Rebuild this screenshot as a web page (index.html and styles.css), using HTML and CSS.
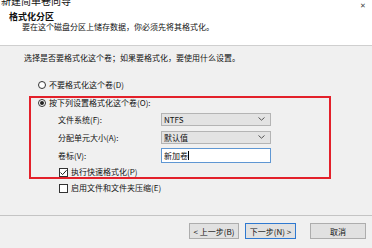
FILE: index.html
```html
<!DOCTYPE html>
<html>
<head>
	<title>新建简单卷向导</title>
	<link rel="stylesheet" href="styles.css">
</head>
<body>
	<div class="header">
		<div class="titlebar">
			<span class="title_text">新建简单卷向导</span>
			<span class="close">✕</span>
		</div>
		<div class="page_title">格式化分区</div>
		<div class="page_sub">要在这个磁盘分区上储存数据，你必须先将其格式化。</div>
	</div>
	<div class="content">
		<div class="prompt">选择是否要格式化这个卷；如果要格式化，要使用什么设置。</div>
		<div class="option first_option">
			<span class="radio"></span>
			<span>不要格式化这个卷(D)</span>
		</div>
		<div class="highlight">
			<div class="option inner_option">
				<span class="radio checked"></span>
				<span>按下列设置格式化这个卷(O):</span>
			</div>
			<div class="field">
				<span class="field_label">文件系统(F):</span>
				<div class="dropdown">
					<span>NTFS</span>
					<svg width="7" height="4" viewBox="0 0 7 4"><polyline points="0.5,0.5 3.5,3.2 6.5,0.5" fill="none" stroke="#555" stroke-width="1"/></svg>
				</div>
			</div>
			<div class="field">
				<span class="field_label">分配单元大小(A):</span>
				<div class="dropdown">
					<span>默认值</span>
					<svg width="7" height="4" viewBox="0 0 7 4"><polyline points="0.5,0.5 3.5,3.2 6.5,0.5" fill="none" stroke="#555" stroke-width="1"/></svg>
				</div>
			</div>
			<div class="field">
				<span class="field_label">卷标(V):</span>
				<div class="textbox"><span>新加卷</span><span class="caret"></span></div>
			</div>
			<div class="check_row inner_check">
				<span class="checkbox">
					<svg width="9" height="9" viewBox="0 0 9 9"><polyline points="1.5,4.5 3.6,6.6 7.6,2.2" fill="none" stroke="#222" stroke-width="1"/></svg>
				</span>
				<span>执行快速格式化(P)</span>
			</div>
		</div>
		<div class="check_row outer_check">
			<span class="checkbox"></span>
			<span>启用文件和文件夹压缩(E)</span>
		</div>
	</div>
	<div class="footer">
		<button class="btn btn_back">&lt; 上一步(B)</button>
		<button class="btn btn_next">下一步(N) &gt;</button>
		<button class="btn btn_cancel">取消</button>
	</div>
</body>
</html>
```
FILE: styles.css
```css
*{
	margin: 0px;
	padding: 0px;
	box-sizing: border-box;
}
body
{
	width: 372px;
	height: 248px;
	overflow: hidden;
	background-color: #f0f0f0;
	color: #111;
	font-family: "Noto Sans CJK SC", "Noto Sans", sans-serif;
	font-size: 8px;
}
.header
{
	height: 50px;
	background-color: #fff;
	border-bottom: 1px solid #cfcfcf;
}
.titlebar
{
	display: flex;
	justify-content: space-between;
	height: 9px;
	margin-top: -4px;
	line-height: 9px;
	font-size: 10px;
}
.title_text
{
	margin-left: 1px;
}
.close
{
	margin-right: 6px;
	margin-top: 5px;
	font-size: 7px;
	color: #444;
}
.page_title
{
	margin-top: 7px;
	margin-left: 9px;
	height: 10px;
	line-height: 10px;
	font-size: 9px;
	font-weight: bold;
}
.page_sub
{
	margin-left: 22px;
	height: 10px;
	line-height: 10px;
}
.prompt
{
	margin-top: 7px;
	margin-left: 24px;
	height: 10px;
	line-height: 10px;
}
.option, .check_row
{
	display: flex;
	align-items: center;
	gap: 3px;
	height: 10px;
	line-height: 10px;
}
.first_option
{
	margin-top: 17px;
	margin-left: 38px;
}
.radio
{
	width: 8px;
	height: 8px;
	border: 1px solid #333;
	border-radius: 50%;
	background-color: #fff;
	display: flex;
	align-items: center;
	justify-content: center;
}
.radio.checked::after
{
	content: "";
	width: 4px;
	height: 4px;
	border-radius: 50%;
	background-color: #222;
}
.highlight
{
	margin-top: 6px;
	margin-left: 29px;
	width: 302px;
	height: 83px;
	border: 2px solid #e3202a;
	padding-left: 7px;
}
.field
{
	display: flex;
	align-items: center;
	height: 14px;
	margin-top: 4px;
	padding-left: 20px;
}
.inner_option + .field
{
	margin-top: 4px;
}
.field_label
{
	width: 103px;
}
.dropdown
{
	display: flex;
	align-items: center;
	justify-content: space-between;
	width: 110px;
	height: 13px;
	padding: 0px 5px 0px 2px;
	background-color: #e3e3e3;
	border: 1px solid #b4b4b4;
}
.textbox
{
	display: flex;
	align-items: center;
	width: 110px;
	height: 15px;
	padding-left: 2px;
	background-color: #fff;
	border: 1px solid #5f97d3;
}
.caret
{
	width: 1px;
	height: 9px;
	background-color: #000;
}
.checkbox
{
	width: 9px;
	height: 9px;
	border: 1px solid #333;
	background-color: #fff;
	display: flex;
}
.checkbox svg
{
	margin: -1px;
}
.inner_check
{
	margin-top: 5px;
	padding-left: 21px;
}
.outer_check
{
	margin-top: 4px;
	margin-left: 59px;
}
.footer
{
	margin-top: 22px;
	border-top: 1px solid #c4c4c4;
	display: flex;
	justify-content: flex-end;
	padding: 7px 6px 0px 0px;
}
.btn
{
	height: 16px;
	font-family: "Noto Sans CJK SC", "Noto Sans", sans-serif;
	font-size: 8px;
	color: #111;
	background-color: #e1e1e1;
	border: 1px solid #adadad;
	outline: none;
}
.btn_back
{
	width: 50px;
}
.btn_next
{
	width: 51px;
	margin-left: 6px;
	border-color: #2f79d0;
}
.btn_cancel
{
	width: 56px;
	margin-left: 14px;
}
```
